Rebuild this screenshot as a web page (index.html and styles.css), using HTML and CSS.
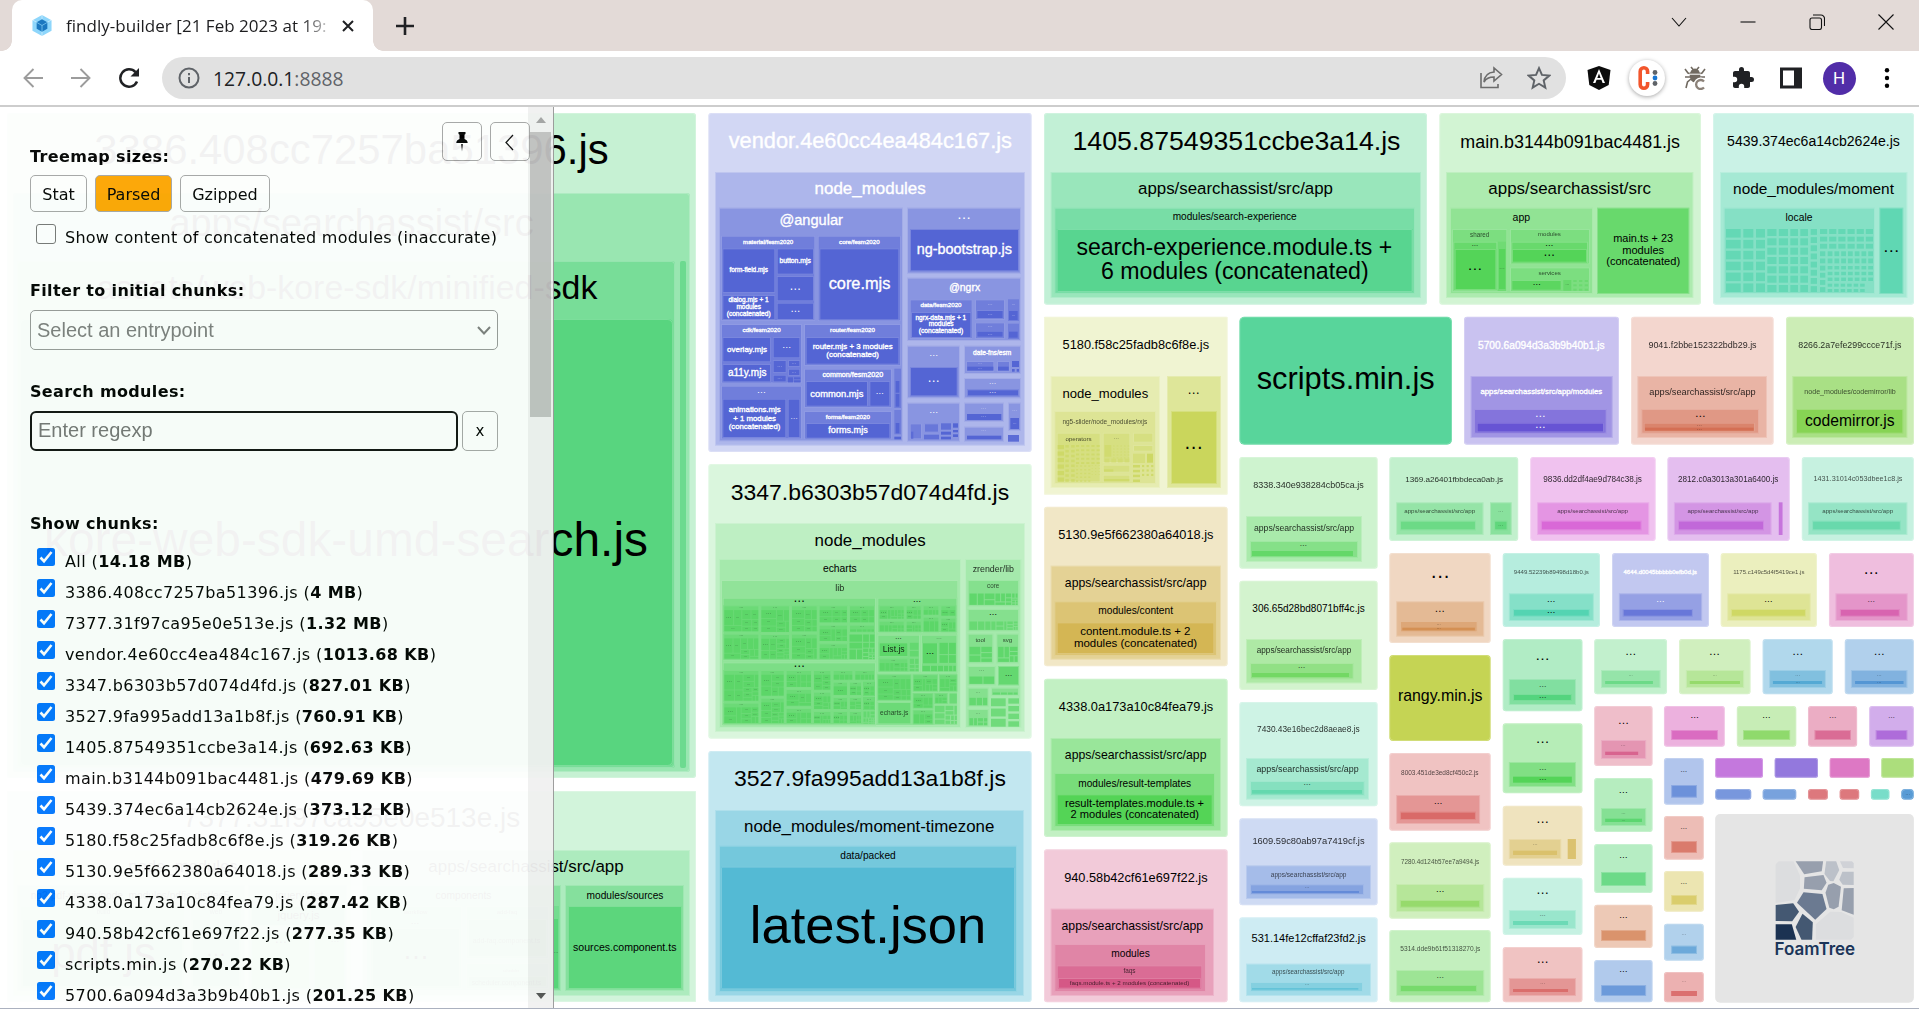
FILE: index.html
```html
<!DOCTYPE html>
<html lang="en">
<head>
<meta charset="utf-8">
<title>findly-builder [21 Feb 2023 at 19:</title>
<link rel="stylesheet" href="styles.css">
</head>
<body>
<header class="tabstrip">
  <div class="tab">
    <svg class="favicon" viewBox="0 0 20 22"><path fill="#8ed6fb" d="M10 0l10 5.5v11L10 22 0 16.500v-11z"/><path fill="#fff" opacity=".6" d="M9.600 0h.8v5h-.8zM0 5.600l.5-.7 4.500 2.600-.5.700zM20 5.600l-.5-.7L15 7.500l.5.700zM9.600 17h.8v5h-.8z"/><path fill="#1c78c0" d="M10 4.500l5.600 3.200v6.600L10 17.500l-5.600-3.200V7.700z"/><path fill="none" stroke="#8ed6fb" stroke-width=".7" d="M4.400 7.700L10 11l5.600-3.300M10 11v6.500"/></svg>
    <span class="tab-title">findly-builder [21 Feb 2023 at 19:</span>
    <svg class="tab-close" viewBox="0 0 12 12"><path d="M1 1l10 10M11 1L1 11"/></svg>
  </div>
  <svg class="new-tab" viewBox="0 0 18 18"><path d="M9 0v18M0 9h18"/></svg>
  <div class="window-buttons">
    <svg viewBox="0 0 16 16"><path d="M1 4l7 8 7-8"/></svg>
    <svg viewBox="0 0 16 16"><path d="M.5 8h15"/></svg>
    <svg viewBox="0 0 16 16"><rect x="1" y="4" width="11.500" height="11.500" rx="2"/><path d="M4 1h8a3.500 3.500 0 013.500 3.500V12"/></svg>
    <svg viewBox="0 0 16 16"><path d="M.5.500l15 15M15.500.500l-15 15"/></svg>
  </div>
</header>
<nav class="toolbar">
  <svg class="nav-icon dim" viewBox="0 0 20 20"><path d="M20 10H1.500M10.500 1L1.500 10l9 9"/></svg>
  <svg class="nav-icon dim" viewBox="0 0 20 20"><path d="M0 10h18.500M9.500 1l9 9-9 9"/></svg>
  <svg class="nav-icon reload" viewBox="0 0 20 20"><path d="M18 13.500A8.700 8.700 0 1 1 16.500 4.200"/><path class="solid" d="M20 0v8.500h-8.500z"/></svg>
  <div class="omnibox">
    <svg class="info" viewBox="0 0 22 22"><circle cx="11" cy="11" r="9.500"/><path d="M11 10v6M11 6v2.200"/></svg>
    <span class="url">127.0.0.1<span>:8888</span></span>
    <svg class="share" viewBox="0 0 24 24"><path d="M2 7v14.500h17V18M15 6V2l7.500 6.500L15 15v-4c-5 0-8 1.500-10 5 .5-6 4-9.500 10-10z"/></svg>
    <svg class="star" viewBox="0 0 22 22"><path d="M11 2l2.700 6.200 6.700.6-5.100 4.400 1.500 6.600L11 16.300l-5.800 3.500 1.500-6.600L1.600 8.800l6.700-.6z"/></svg>
  </div>
  <div class="extensions">
    <svg viewBox="0 0 24 24"><path fill="#0b0b0b" d="M12 0l11.500 4-1.800 15L12 24 2.300 19 .5 4z"/><path fill="#fff" d="M12 3l6 14h-2.400l-1.200-3.200H9.600L8.400 17H6zM12 7.600l-1.700 4.300h3.400z"/></svg>
    <div class="c-badge"><svg viewBox="0 0 24 24"><path fill="none" stroke="#f2552c" stroke-width="3.600" d="M12.600 8V5.500a3.700 3.700 0 00-7.400 0v13a3.700 3.700 0 007.400 0V16"/><circle cx="20" cy="6.500" r="2.400" fill="#5f6368"/><circle cx="20" cy="12" r="2.400" fill="#1976d2"/><circle cx="20" cy="17.500" r="2.400" fill="#5f6368"/></svg></div>
    <svg viewBox="0 0 24 24"><ellipse cx="12" cy="9.500" rx="5.300" ry="7" fill="#716a61"/><path fill="none" stroke="#716a61" stroke-width="1.600" d="M8 1l2.500 3M16 1l-2.500 3M2 3l3 4 3 1M22 3l-3 4-3 1M2 11h20M3 22l1.500-6L8 13"/><path stroke="#fff" d="M6 8.200h12"/><path fill="none" stroke="#fff" stroke-width="5" d="M21 15.500a4.500 4.500 0 100 6"/><path fill="none" stroke="#8b8178" stroke-width="2.300" d="M21 15.500a4.500 4.500 0 100 6"/></svg>
    <svg viewBox="0 0 24 24"><path fill="#202124" d="M20.500 11H19V7c0-1.100-.9-2-2-2h-4V3.500a2.500 2.500 0 00-5 0V5H4c-1.100 0-2 .9-2 2v3.800h1.500a2.700 2.700 0 010 5.400H2V20c0 1.100.9 2 2 2h3.800v-1.500a2.700 2.700 0 015.400 0V22H17c1.100 0 2-.9 2-2v-4h1.500a2.500 2.500 0 000-5z"/></svg>
    <svg viewBox="0 0 24 24"><path fill="#202124" d="M1 1.500h22v21H1z"/><path fill="#fff" d="M4 4.500h11v15H4z"/></svg>
    <div class="avatar">H</div>
    <svg viewBox="0 0 24 24"><circle cx="12" cy="4.200" r="2.200"/><circle cx="12" cy="12" r="2.200"/><circle cx="12" cy="19.800" r="2.200"/></svg>
  </div>
</nav>
<main class="viewport">
  <svg class="treemap" id="treemap" viewBox="0 107 1919 901"></svg>
  <aside class="sidebar">
    <div class="panel">
      <h2>Treemap sizes:</h2>
      <div class="sizes"><button>Stat</button><button class="active">Parsed</button><button>Gzipped</button></div>
      <label class="concat"><i class="box"></i>Show content of concatenated modules (inaccurate)</label>
      <h2 class="filter">Filter to initial chunks:</h2>
      <div class="select">Select an entrypoint<svg viewBox="0 0 14 9"><path d="M1 1l6 6.500L13 1"/></svg></div>
      <h2 class="search">Search modules:</h2>
      <div class="search-row"><div class="field">Enter regexp</div><button>x</button></div>
      <h2 class="chunks-title">Show chunks:</h2>
      <ul class="chunks" id="chunks"></ul>
    </div>
    <div class="scrollbar"><i class="up"></i><i class="thumb"></i><i class="down"></i></div>
    <div class="panel-actions">
      <button><svg viewBox="0 0 12 20"><path d="M2.500 0h7v2l-1 .8V7c2 .8 3.200 2 3.200 4H.3c0-2 1.200-3.200 3.200-4V2.800L2.500 2zM5.200 12h1.600L6 19.500z"/></svg></button>
      <button><svg viewBox="0 0 12 20"><path class="line" d="M9 3L2 10.500 9 18"/></svg></button>
    </div>
  </aside>
</main>
<script src="treemap.js"></script>
</body>
</html>
```
FILE: styles.css
```css
* { box-sizing: border-box; }
body { margin: 0; width: 1919px; height: 1009px; overflow: hidden; background: #fff; font-family: "DejaVu Sans", sans-serif; display: flex; flex-direction: column; }
svg { display: block; flex: none; }
.tabstrip { height: 51px; background: #e3dad7; display: flex; align-items: center; padding-left: 12px; flex: none; }
.tab { position: relative; width: 361px; height: 51px; background: #fff; border-radius: 10px 10px 0 0; display: flex; align-items: center; padding-left: 20px; }
.tab::before, .tab::after { content: ""; position: absolute; bottom: 0; width: 10px; height: 10px; }
.tab::before { left: -10px; background: radial-gradient(circle at 0 0, transparent 9.500px, #fff 10px); }
.tab::after { right: -10px; background: radial-gradient(circle at 100% 0, transparent 9.500px, #fff 10px); }
.favicon { width: 20px; height: 21px; }
.tab-title { margin-left: 14px; width: 262px; font: 17px "Open Sans", sans-serif; letter-spacing: .03px; color: #1d1d1f; white-space: nowrap; overflow: hidden; -webkit-mask-image: linear-gradient(90deg, #000 235px, transparent 270px); mask-image: linear-gradient(90deg, #000 235px, transparent 270px); }
.tab-close { width: 12px; height: 12px; margin-left: 14px; fill: none; stroke: #202124; stroke-width: 2; }
.new-tab { width: 18px; height: 18px; margin-left: 23px; stroke: #202124; stroke-width: 2.600; }
.window-buttons { margin-left: auto; display: flex; gap: 53px; padding-right: 25px; margin-top: -8px; }
.window-buttons svg { width: 16px; height: 16px; fill: none; stroke: #111; stroke-width: 1.100; }
.toolbar { height: 56px; border-bottom: 2px solid #cdcdcd; display: flex; align-items: center; padding-left: 23px; flex: none; }
.nav-icon { width: 20px; height: 20px; margin-right: 28px; fill: none; stroke: #202124; stroke-width: 2.500; }
.nav-icon.dim { stroke: #9c9c9c; stroke-width: 1.900; }
.nav-icon.reload { margin-right: 23px; }
.nav-icon .solid { fill: #202124; stroke: none; }
.omnibox { width: 1404px; height: 42px; border-radius: 21px; background: #e1e1e1; display: flex; align-items: center; padding: 0 15px 0 16px; }
.info { width: 22px; height: 22px; fill: none; stroke: #5f6368; stroke-width: 2; }
.url { margin-left: 13px; font: 19.300px "Open Sans", sans-serif; color: #202124; }
.url span { color: #5f6368; }
.share { width: 24px; height: 24px; margin-left: auto; fill: none; stroke: #6c6c6c; stroke-width: 1.600; }
.star { width: 24px; height: 24px; margin-left: 24px; fill: none; stroke: #5f6368; stroke-width: 1.800; }
.extensions { display: flex; align-items: center; gap: 24px; margin-left: 21px; }
.extensions > svg { width: 24px; height: 24px; }
.c-badge { width: 36px; height: 36px; margin: 0 -6px; border-radius: 50%; background: #fff; box-shadow: 0 1px 4px rgba(0,0,0,.35); display: grid; place-items: center; }
.c-badge svg { width: 24px; height: 24px; }
.avatar { width: 33px; height: 33px; margin: 0 -4.500px; border-radius: 50%; background: #512da8; color: #fff; font: 17px/33px Roboto, sans-serif; text-align: center; }
.viewport { position: relative; height: 902px; border-bottom: 1px solid #abb1bf; overflow: hidden; flex: none; }
.treemap { width: 1919px; height: 901px; }
.treemap text { font-family: "Liberation Sans", Arial, sans-serif; text-anchor: middle; }
.treemap .brand { font-family: Inter, sans-serif; font-weight: 600; fill: #1b3559; }
.sidebar { position: absolute; left: 0; top: 0; width: 554px; height: 901px; background: #fff; opacity: .95; border-right: 1px solid #999; display: flex; font-size: 16px; line-height: 20px; color: #000; }
.panel { width: 528px; height: 901px; padding: 40px 30px 0; overflow: hidden; }
h2 { margin: 0; font-size: 16px; line-height: 20px; font-weight: bold; letter-spacing: .35px; }
button { font: 16px/20px "DejaVu Sans", sans-serif; color: #000; background: #fff; border: 1px solid #a6a6a6; border-radius: 5px; padding: 0; }
.sizes { display: flex; gap: 8px; margin-top: 8px; }
.sizes button { height: 37px; width: 57px; padding-top: 3px; }
.sizes .active { background: #ffa500; width: 77px; }
.sizes button:last-child { width: 90px; }
.concat { display: flex; height: 20px; margin: 16px 0 0 6px; white-space: nowrap; letter-spacing: .24px; }
.box { width: 20px; height: 20px; flex: none; margin: -4px 9px 0 0; border: 1.500px solid #767676; border-radius: 3px; }
.filter { margin-top: 33px; }
.select { width: 468px; height: 40px; margin-top: 9px; border: 1px solid #999; border-radius: 5px; display: flex; align-items: center; justify-content: space-between; padding: 0 6px; font-family: "Liberation Sans", Arial, sans-serif; font-size: 20px; color: #7d7d7d; }
.select svg { width: 14px; height: 9px; fill: none; stroke: #7d7d7d; stroke-width: 2; }
.search { margin-top: 32px; }
.search-row { display: flex; gap: 4px; margin-top: 9px; }
.field { width: 428px; height: 40px; border: 2.500px solid #101010; border-radius: 6px; padding: 6px 6px; font: 20px/23px "Liberation Sans", Arial, sans-serif; color: #757575; }
.search-row button { width: 36px; height: 40px; font-size: 15px; }
.chunks-title { margin-top: 63px; }
.chunks { list-style: none; margin: 12px 0 0 6px; padding: 0; letter-spacing: .4px; }
.chunks li { display: flex; height: 31px; white-space: nowrap; padding-top: 6px; }
.chunks svg { width: 18px; height: 18px; margin: -4px 10px 0 1px; }
.scrollbar { width: 25px; background: #f1f1f1; display: flex; flex-direction: column; align-items: center; }
.up, .down { border: 5.500px solid transparent; }
.up { border-bottom: 6px solid #a3a3a3; border-top: 0; margin-top: 10px; }
.thumb { width: 21px; height: 285px; background: #c1c1c1; margin-top: 9px; }
.down { border-top: 6px solid #505050; border-bottom: 0; margin-top: auto; margin-bottom: 9px; }
.panel-actions { position: absolute; left: 442px; top: 15px; display: flex; gap: 8px; }
.panel-actions button { width: 40px; height: 39px; display: grid; place-items: center; background: none; }
.panel-actions svg { width: 12px; height: 20px; }
.panel-actions .line { fill: none; stroke: #111; stroke-width: 1.300; }
```
FILE: treemap.js
```js
const SVG = 'http://www.w3.org/2000/svg';
const root = document.getElementById('treemap');

// Commands, one per line, in the units of the section they belong to:
//   h hue                     current hue
//   r x1 y1 x2 y2 light [rad] group rectangle
//   t x1 x2 baseline label    dark label fitted between x1 and x2
//   w x1 x2 baseline label    white label
//   d cx cy width [w]         collapsed label
//   g x1 y1 x2 y2 cols rows light
//   m x1 y1 x2 y2 count light squarified leaves
//   s x1 y1 x2 y2 count       small group with header and leaves
const sections = [
[0, 0, 1, 1, `
h 139
r 7 113 696 778 86 3
t 96 607 164 3386.408cc7257ba51396.js
r 13 193 690 772 75 3
t 171 532 236 apps/searchassist/src
r 17 261 675 768 67 3
r 680 261 686 768 64 2
t 98 596 299 assets/web-kore-sdk/minified-sdk
r 20 319 673 766 59 5
t 46 646 556 kore-web-sdk-umd-search.js
h 136
r 7 791 696 1002 89 1
t 184 519 827 7377.31f97ca95e0e513e.js
r 13 850 351 996 81
t 129 237 872 node_modules
r 362 850 690 996 80
t 429 623 872 apps/searchassist/src/app
r 17 885 245 991 73
t 31 229 899 ng2-pdf-viewer/node_modules/pdfjs-dist/es5
r 20 906 185 989 67
t 97 110 914 build
r 22 919 183 987 59
t 53 154 968 pdf.js
r 190 906 242 989 67
t 210 222 914 web
r 192 919 240 987 59
d 216 955 16
r 248 885 347 991 73
t 276 323 899 jquery/dist
r 251 906 345 926 59
t 278 319 919 jquery.js
r 251 931 310 989 62
d 281 942 10
r 314 931 345 989 62
d 335 942 7
r 366 885 561 991 70
t 436 491 899 components
r 370 906 462 989 66
t 404 427 914 workflow
d 415 924 7
r 372 928 460 987 59
d 416 958 21
r 466 906 549 959 66
t 497 517 914 add-faq
r 468 919 547 957 59
t 473 540 943 add-faq.component.ts
r 466 963 549 989 66
t 503 519 972 scheduler
r 468 976 547 987 59
t 472 541 985 scheduler.component.ts
r 552 906 559 989 66
r 554 919 558 988 59
d 556 953 4
r 565 885 684 991 70
t 587 663 899 modules/sources
r 568 906 682 989 60
t 573.500 676 951 sources.component.ts
`],
[540, 100, 3, 3, `
h 232
r 505 39 1475 1056 89 3
w 569 1413 145 vendor.4e60cc4ea484c167.js
r 525 216 1455 1037 80
w 826 1155 283 node_modules
r 537 323 1089 1024 71
w 720 907 375 @angular
r 543 407 826 663 65
w 610 759 431 material/fesm2020
r 547 445 706 579 58
w 569 683 516 form-field.mjs
r 547 585 706 660 58
w 566 685 606 dialog.mjs + 1
w 590 662 627 modules
w 561 691 648 (concatenated)
r 710 445 822 524 58
w 719 812 489 button.mjs
r 710 528 822 604 58
d 766 567 28 w
r 710 608 822 660 58
d 766 635 24 w
r 833 407 1083 663 65
w 898 1018 431 core/fesm2020
r 838 445 1078 661 58
w 868 1049 567 core.mjs
r 543 672 786 850 65
w 608 721 696 cdk/fesm2020
r 547 711 693 787 58
w 562 680 756 overlay.mjs
r 547 792 693 847 58
w 565 678 827 a11y.mjs
r 698 711 781 775 58
d 740 743 22 w
r 698 780 740 819 58
d 719 800 13 w
r 744 780 781 801 58
d 762 792 10 w
r 744 806 781 828 58
d 762 818 10 w
r 698 824 740 847 58
d 719 836 11 w
r 744 832 759 847 58
r 762 832 781 838 58
r 762 841 781 847 58
r 792 672 1083 798 65
w 871 1004 696 router/fesm2020
r 797 711 1078 794 58
w 819 1057 747 router.mjs + 3 modules
w 860 1016 771 (concatenated)
r 792 806 1056 924 65
w 848 1029 831 common/fesm2020
r 797 843 984 920 58
w 812 969 890 common.mjs
r 988 843 1051 920 58
d 1019 882 20 w
r 1063 806 1083 924 65
r 1067 843 1078 878 58
r 1067 882 1078 920 58
r 543 857 786 1018 65
d 664 878 22 w
r 547 896 739 1014 58
w 567 721 935 animations.mjs
w 581 707 962 + 1 modules
w 567 720 986 (concatenated)
r 743 896 781 1014 58
d 762 956 18 w
r 792 933 1056 1018 65
w 858 989 957 forms/fesm2020
r 797 969 1051 1016 58
w 866 982 998 forms.mjs
r 1063 930 1083 1003 65
r 1067 969 1078 1000 58
r 1063 1010 1083 1018 58
r 1101 323 1443 521 71
d 1272 354 34 w
r 1110 387 1437 514 58
w 1132 1414 461 ng-bootstrap.js
r 1101 533 1443 723 71
w 1229 1319 573 @ngrx
r 1109 598 1298 717 65
w 1142 1264 621 data/fesm2020
r 1113 636 1294 714 58
w 1127 1278 661 ngrx-data.mjs + 1
w 1167 1240 679 modules
w 1137 1269 699 (concatenated)
r 1305 598 1395 660 65
d 1350 613 13 w
r 1309 630 1391 657 58
d 1350 644 13 w
r 1305 667 1395 717 65
d 1350 680 13 w
r 1309 692 1391 713 58
d 1350 703 13 w
r 1404 598 1437 663 65
d 1420 615 9 w
r 1407 633 1433 660 58
d 1420 647 9 w
r 1404 671 1437 717 65
r 1407 695 1433 713 58
r 1101 737 1260 895 71
d 1181 768 22 w
r 1110 801 1253 889 58
d 1181 844 30 w
r 1272 737 1443 822 71
w 1300 1413 765 date-fns/esm
r 1278 783 1363 816 65
d 1320 792 9 w
r 1282 800 1360 811 58
d 1320 806 9 w
r 1371 783 1410 816 65
r 1374 800 1406 811 58
r 1416 783 1437 801 58
r 1416 807 1424 815 58
r 1430 807 1437 815 58
r 1272 834 1443 895 71
d 1358 851 18 w
r 1281 868 1437 889 58
d 1358 878 18 w
r 1101 908 1260 1025 71
d 1181 939 22 w
r 1109 970 1146 1018 65
r 1113 995 1120 1016 60
r 1152 970 1197 998 63
r 1152 1004 1197 1018 61
r 1203 970 1233 989 61
r 1203 995 1233 1004 58
r 1203 1010 1233 1018 58
r 1239 970 1254 983 58
r 1239 990 1254 997 58
r 1239 1003 1254 1011 58
r 1272 908 1392 966 71
d 1331 925 14 w
r 1281 942 1384 960 58
d 1331 951 14 w
r 1272 980 1392 1025 71
d 1331 993 12 w
r 1281 1007 1384 1018 58
r 1404 908 1443 993 71
d 1424 931 12 w
r 1411 954 1437 987 58
d 1424 970 9 w
r 1404 1005 1437 1025 60
`],
[540, 450, 3, 3, `
h 126
r 505 42 1475 866 91 3
t 575 1405 149 3347.b6303b57d074d4fd.js
r 525 219 1455 846 84
t 826 1155 288 node_modules
r 537 327 1263 834 78
t 850 949 366 echarts
r 543 390 1255 828 73
t 887 912 422 lib
r 548 443 1008 632 68
d 778 454 28
s 550 466 658 547 9
s 661 466 750 549 8
s 753 466 833 547 9
s 836 466 924 520 6
s 927 466 1005 520 6
s 550 551 658 629 11
s 661 552 750 629 14
s 753 551 833 629 8
s 836 524 924 576 7
s 836 580 924 629 10
s 927 524 1005 548 5
m 927 552 1005 629 18 60
r 548 637 1008 826 68
d 778 648 28
s 550 660 658 755 14
s 661 660 734 740 6
s 737 660 816 714 7
s 819 660 874 722 5
s 878 660 940 692 4
s 943 660 1005 692 5
s 550 758 658 822 10
s 661 743 734 822 13
s 737 717 816 770 5
s 737 774 816 822 7
s 819 725 874 780 8
s 819 783 874 822 8
s 878 695 924 738 1
s 927 695 966 738 4
s 969 695 1005 738 4
s 878 741 924 780 5
s 927 741 966 780 5
s 969 741 1005 780 4
s 878 783 924 822 6
s 927 783 966 822 7
m 969 783 1005 822 16 62
r 1012 443 1252 549 68
d 1131 454 20
s 1016 466 1094 509 12
s 1097 466 1145 509 6
s 1148 466 1198 497 4
s 1201 466 1249 500 2
s 1016 512 1094 547 9
s 1097 512 1145 547 7
s 1148 500 1198 547 3
s 1201 503 1249 547 5
r 1012 554 1140 668 68
d 1075 566 16
r 1016 577 1105 621 60
t 1029 1093 606 List.js
m 1108 577 1137 621 2 62
s 1016 625 1105 665 9
m 1108 625 1137 665 6 62
r 1143 554 1252 668 68
d 1197 566 14
r 1146 577 1194 643 60
d 1170 610 20
m 1197 577 1249 640 4 60
m 1146 646 1249 665 6 60
s 1012 673 1114 752 12
r 1012 756 1114 823 64
t 1021 1104 795 echarts.js
s 1118 673 1194 725 9
s 1197 673 1252 725 7
s 1118 729 1180 776 5
s 1118 779 1180 823 4
s 1183 729 1223 762 4
m 1227 729 1252 762 1 64
m 1183 766 1252 823 12 64
r 1275 327 1444 834 78
t 1299 1421 365 zrender/lib
r 1283 390 1437 469 70
t 1342 1377 413 core
m 1287 429 1434 466 17 61
r 1283 477 1437 544 70
d 1359 494 20
m 1287 513 1434 541 14 63
r 1283 551 1360 640 70
t 1307 1335 575 tool
m 1287 589 1357 637 5 61
r 1369 551 1437 640 70
t 1389 1416 575 svg
m 1373 589 1434 637 7 61
r 1283 648 1367 706 70
d 1325 663 14
m 1287 678 1364 703 2 61
r 1374 648 1437 706 62
d 1406 677 18
r 1283 713 1346 770 70
d 1314 728 10
m 1287 742 1343 767 3 62
r 1283 777 1346 830 70
d 1314 791 10
m 1287 803 1343 827 6 62
r 1353 713 1437 738 70
m 1357 726 1434 735 4 62
g 1353 745 1397 830 1 3 65
g 1405 745 1437 830 1 4 65
`],
[540, 740, 3, 3, `
h 192
r 505 33 1475 786 85 3
t 585 1395 137 3527.9fa995add13a1b8f.js
r 525 210 1452 768 75
t 614 1361 276 node_modules/moment-timezone
r 537 317 1431 756 66
t 902 1066 356 data/packed
r 543 380 1425 748 58 1
t 636 1332 608 latest.json
`],
[1030, 100, 3, 3, `
h 147
r 42 39 1191 614 85 3
t 131 1108 150 1405.87549351ccbe3a14.js
r 62 216 1173 594 75
t 326 907 282 apps/searchassist/src/app
r 73 323 1155 582 67
t 429 799 361 modules/search-experience
r 80 387 1148 576 59 1
t 142 1084 464 search-experience.module.ts +
t 216 1013 537 6 modules (concatenated)
h 66
r 42 650 593 1184 89 1
t 99 536 748 5180.f58c25fadb8c6f8e.js
r 62 828 390 1164 81
t 99 353 893 node_modules
r 73 933 378 1152 74
t 98 351 971 ng5-slider/node_modules/rxjs
r 80 998 212 1147 69
t 107 184 1022 operators
g 83 1035 102 1145 1 6 63
g 106 1035 134 1145 2 8 64
g 138 1035 209 1092 5 5 64
g 138 1096 181 1145 4 5 65
g 185 1096 209 1125 3 4 65
r 218 998 301 1089 69
d 259 1017 14
r 224 1035 244 1070 65
g 249 1037 298 1075 5 5 64
g 224 1076 298 1087 4 1 66
r 218 1094 301 1118 69
r 222 1108 250 1115 64
r 218 1124 301 1147 69
r 222 1137 298 1144 64
r 309 998 370 1028 69
r 309 1035 370 1055 69
r 309 1061 345 1089 68
r 351 1061 369 1088 62
g 309 1095 330 1146 1 4 63
g 336 1095 370 1128 3 3 64
r 411 828 573 1164 75
d 491 880 30
r 423 933 561 1152 60
d 491 1043 46
h 152
r 628 650 1266 1034 59 5
t 684 1210 867 scripts.min.js
`],
[1470, 100, 3, 3, `
h 122
r -92 39 693 614 89 3
t -27 628 143 main.b3144b091bac4481.js
r -72 216 670 594 80
t 57 541 283 apps/searchassist/src
r -60 323 369 582 73
t 129 179 362 app
r -54 387 112 576 68
t 1 57 410 shared
r -50 425 82 573 63
d 15 436 16
r -46 447 79 570 58
d 15 508 36
r 84 425 108 573 65
r 87 447 106 567 59
d 96 505 14
r 120 387 360 493 68
t 205 272 409 modules
r 124 425 354 491 63
d 238 436 20
r 126 447 351 488 58
d 238 467 28
r 120 502 360 576 68
t 206 272 524 services
r 124 540 275 572 60
d 200 555 20
r 280 540 304 572 63
d 292 555 10
g 310 540 354 572 3 3 64
r 381 323 658 582 63
t 431 608 426 main.ts + 23
t 458 581 461 modules
t 410 629 495 (concatenated)
h 162
r 729 39 1332 614 87 3
t 773 1288 138 5439.374ec6a14cb2624e.js
r 750 216 1312 594 78
t 791 1270 283 node_modules/moment
r 761 323 1215 582 70
t 948 1026 362 locale
g 768 387 812 576 1 6 62
g 820 387 850 576 1 6 62
g 858 387 885 576 1 6 62
g 892 387 954 576 2 7 62
g 961 387 984 576 1 7 62
g 991 387 1014 576 1 7 62
g 1022 387 1041 576 1 8 62
g 1050 387 1209 402 6 1 62
g 1050 410 1209 446 6 2 62
g 1050 454 1066 576 1 6 62
g 1073 454 1209 490 7 2 62
g 1073 498 1209 543 7 3 62
g 1073 551 1184 576 6 2 62
r 1228 323 1300 582 61
d 1264 452 40
h 249
r -18 650 447 1034 85 3
w 25 403 746 5700.6a094d3a3b9b40b1.js
r 2 828 428 1014 74
w 32 396 881 apps/searchassist/src/app/modules
r 12 927 410 1001 66
d 211 948 26 w
r 20 968 402 997 58
d 211 982 26 w
h 13
r 483 650 911 1034 88 3
t 536 859 743 9041.f2bbe152322bdb29.js
r 502 828 891 1014 78
t 539 856 884 apps/searchassist/src/app
r 514 927 867 1001 70
d 691 948 26
r 521 968 855 995 64
r 525 983 851 992 58
d 688 976 14
d 688 988 14
h 96
r 948 650 1332 1034 82 3
t 986 1293 743 8266.2a7efe299ccce71f.js
r 967 828 1312 1014 70
t 1004 1276 881 node_modules/codemirror/lib
r 978 927 1300 1001 58
t 1007 1272 977 codemirror.js
`],
[1030, 440, 3, 3, `
h 46
r 42 200 593 679 86 3
t 86 549 298 5130.9e5f662380a64018.js
r 62 377 573 659 74
t 106 528 441 apps/searchassist/src/app
r 73 484 561 648 66
t 206 428 521 modules/content
r 80 547 553 642 58
t 152 480 584 content.module.ts + 2
t 133 500 620 modules (concatenated)
h 121
r 42 716 593 1191 85 3
t 88 548 813 4338.0a173a10c84fea79.js
h 122
r 628 51 1043 386 88 3
t 671 1000 143 8338.340e938284cb05ca.js
r 648 228 996 366 79
t 673 971 272 apps/searchassist/src/app
r 660 303 984 354 70
d 820 317 18
r 666 333 969 348 62
h 112
r 628 422 1043 750 88 3
t 668 1003 515 306.65d28bd8071bff4c.js
r 648 597 996 730 78
t 681 963 638 apps/searchassist/src/app
r 660 669 971 718 70
d 815 684 18
r 666 699 957 711 62
h 158
r 628 786 1043 1099 88 3
t 682 988 875 7430.43e16bec2d8aeae8.js
`],
[1030, 730, 3, 3, `
h 121
r 62 24 573 303 75
t 106 528 87 apps/searchassist/src/app
r 73 129 555 291 67
t 146 482 170 modules/result-templates
r 80 193 548 285 58
t 106 521 230 result-templates.module.ts +
t 123 506 264 2 modules (concatenated)
h 338
r 42 358 593 817 87 3
t 104 531 457 940.58b42cf61e697f22.js
r 62 536 552 798 77
t 96 518 600 apps/searchassist/src/app
r 73 642 528 786 70
t 245 358 681 modules
r 80 706 517 779 64
t 281 316 728 faqs
r 84 744 513 776 59
t 120 477 764 faqs.module.ts + 2 modules (concatenated)
h 158
r 648 84 1017 209 78
t 680 985 126 apps/searchassist/src/app
r 660 153 1004 198 70
d 831 165 18
r 666 180 996 191 62
h 220
r 628 265 1043 526 88 3
t 668 1003 341 1609.59c80ab97a7419cf.js
r 648 406 1023 507 78
t 723 949 440 apps/searchassist/src/app
r 660 463 1002 495 70
d 831 472 12
r 666 483 987 489 62
h 191
r 628 562 1043 817 88 3
t 666 1006 637 531.14fe12cffaf23fd2.js
r 648 701 1023 798 77
t 727 943 731 apps/searchassist/src/app
r 660 756 999 786 70
d 831 765 12
r 666 774 985 779 62
`],
[1380, 440, 2.909, 3, `
h 134
r 27 51 402 303 85 3
t 74 357 126 1369.a26401fbbdeca0ab.js
r 47 187 301 285 74
t 71 276 218 apps/searchassist/src/app
r 58 242 279 271 64
r 320 187 383 285 71
d 351 214 12
r 332 242 371 271 61
d 351 257 12
h 301
r 437 51 802 303 85 3
t 476 761 126 9836.dd2df4ae9d784c38.js
r 457 187 783 285 74
t 516 721 218 apps/searchassist/src/app
r 468 242 761 271 63
h 287
r 836 51 1192 303 84 3
t 868 1158 126 2812.c0a3013a301a6400.js
r 855 187 1139 285 74
t 895 1100 218 apps/searchassist/src/app
r 867 242 1117 271 63
r 1160 187 1171 285 66
h 156
r 1227 51 1553 303 86 3
t 1262 1519 123 1431.31014c053dbee1c8.js
r 1245 187 1534 285 74
t 1287 1492 218 apps/searchassist/src/app
r 1257 242 1515 271 63
h 28
r 27 339 322 609 85 3
d 175 412 46
r 47 484 303 590 74
d 174 514 24
r 58 543 284 577 67
d 171 554 10
r 65 563 276 571 58
d 171 567 10
h 67
r 27 645 322 903 58 4
t 54 296 784 rangy.min.js
h 164
r 357 339 640 561 82 3
t 390 607 403 9449.52239b89498d18b0.js
r 375 460 622 543 70
d 498 484 20
r 387 507 610 530 58
d 498 519 20
h 232
r 675 339 957 561 85 3
w 709 921 403 4644.d0045bbbbb0efb0d.js
r 695 460 937 543 74
d 816 484 20 w
r 706 507 910 530 63
h 65
r 991 339 1271 561 84 3
t 1028 1234 403 1175.c149c5d4f5419ce1.js
r 1010 460 1253 543 74
d 1130 484 20
r 1021 507 1239 530 62
h 321
r 1306 339 1553 561 84 3
d 1429 400 36
r 1325 460 1535 543 74
d 1429 484 18
r 1338 507 1512 530 62
h 140
r 357 597 589 814 81 3
d 473 657 34
r 375 717 570 795 69
d 473 740 18
r 387 762 558 783 58
d 473 772 18
h 135
r 623 597 835 763 85 3
d 729 643 26
r 643 690 816 744 74
d 729 706 10
r 655 723 794 732 64
h 97
r 870 597 1078 763 84 3
d 973 643 26
r 890 690 1059 744 75
d 974 706 10
r 901 723 1047 732 64
h 200
r 1113 597 1317 763 81 3
d 1215 643 26
r 1132 690 1297 744 69
d 1215 706 12
r 1143 723 1286 732 58
d 1215 728 10
h 209
r 1352 597 1553 763 81 3
d 1452 643 26
r 1370 690 1534 744 69
d 1452 706 12
r 1382 723 1523 732 58
d 1452 728 10
h 345
r 623 798 793 978 84 3
d 708 849 26
h 314
r 826 798 1003 920 81 3
d 915 834 20
r 847 870 983 900 64
h 101
r 1038 798 1211 920 82 3
d 1124 834 20
r 1056 870 1193 900 64
h 338
r 1245 798 1388 920 80 3
d 1317 834 18
r 1264 870 1370 900 64
h 276
r 1423 798 1553 920 80 3
d 1488 834 16
r 1442 870 1534 900 64
h 122
r 357 850 589 1060 82 3
`],
[1380, 730, 2.909, 3, `
h 338
r 643 30 774 87 74
d 707 47 12
r 655 65 751 75 62
h 1
r 27 69 322 302 85 3
t 62 286 136 8003.451de3ed8cf450c2.js
r 47 195 291 282 74
d 169 220 20
r 58 245 279 270 63
h 97
r 27 337 322 566 84 3
t 62 288 403 7280.4d124b57ee7a9494.js
r 47 462 303 546 75
d 175 486 20
r 58 510 291 533 64
h 114
r 27 600 322 817 84 3
t 60 291 663 5314.dde9b61f51318270.js
r 47 720 303 798 74
d 175 742 18
r 58 765 282 786 64
h 122
d 473 38 32
r 375 96 570 171 69
d 473 118 18
r 387 140 558 158 58
d 473 150 18
h 46
r 357 227 589 407 84 3
d 473 276 30
r 375 327 527 387 73
d 451 345 12
r 387 362 515 375 64
r 546 327 570 387 65
h 160
r 357 443 589 615 86 3
d 473 491 30
r 375 540 570 597 75
d 473 556 14
r 387 573 547 585 64
h 1
r 357 651 589 817 85 3
d 473 698 28
r 375 744 570 798 74
d 473 761 12
r 387 777 547 786 64
h 130
r 623 144 793 306 82 3
d 708 189 22
r 643 234 774 288 70
d 708 251 10
r 655 266 762 276 60
d 708 271 8
h 135
r 623 342 793 489 82 3
d 708 384 20
r 643 426 774 468 64
h 21
r 623 524 793 654 82 3
d 708 562 20
r 643 600 774 633 64
h 215
r 623 690 793 817 81 3
d 708 726 20
r 643 765 774 798 64
h 220
r 826 84 942 224 81 3
d 884 125 16
r 847 165 922 203 64
h 8
r 826 258 942 389 82 3
d 884 296 16
r 847 333 922 369 64
h 53
r 826 423 942 545 81 3
d 884 460 16
r 847 495 922 525 64
h 207
r 826 581 942 692 81 3
d 884 613 12
r 847 647 922 672 64
h 0
r 826 726 942 817 81 3
d 884 755 10
r 847 783 922 798 65
h 285
r 975 84 1114 143 67 2
h 256
r 1148 84 1274 143 67 2
h 315
r 1308 84 1425 143 67 2
h 91
r 1458 84 1553 143 68 2
h 222
r 975 177 1080 209 67 3
h 215
r 1113 177 1211 209 67 3
h 357
r 1245 177 1303 209 67 3
r 1337 177 1394 209 67 3
h 168
r 1428 177 1482 209 67 3
h 208
r 1516 177 1553 209 59 4
d 1535 194 11
`],
];

const add = (tag, attrs, text) => {
  const el = document.createElementNS(SVG, tag);
  for (const k in attrs) el.setAttribute(k, attrs[k]);
  if (text) el.textContent = text;
  root.appendChild(el);
  return el;
};

function fitted(x1, x2, y, text, attrs) {
  const el = add('text', { x: (x1 + x2) / 2, y, 'font-size': 100, ...attrs }, text);
  const size = (x2 - x1) / (el.getComputedTextLength() / 100 - 0.085);
  el.setAttribute('font-size', size.toFixed(2));
  if (attrs.fill === '#000' && size < 9.5) el.setAttribute('opacity', size < 7.5 ? 0.68 : 0.82);
}

function leaves(x1, y1, x2, y2, n, gap, draw) {
  const items = Array.from({ length: n }, (_, i) => Math.pow(0.84, i));
  const split = (list, a, b, c, d) => {
    if (list.length === 1) return draw(a + gap / 2, b + gap / 2, c - gap / 2, d - gap / 2);
    const total = list.reduce((s, v) => s + v, 0);
    let k = 0, sum = 0;
    do { sum += list[k++]; } while (k < list.length - 1 && sum < total * 0.45);
    const f = sum / total;
    if (c - a > d - b) {
      split(list.slice(0, k), a, b, a + (c - a) * f, d);
      split(list.slice(k), a + (c - a) * f, b, c, d);
    } else {
      split(list.slice(0, k), a, b, c, b + (d - b) * f);
      split(list.slice(k), a, b + (d - b) * f, c, d);
    }
  };
  split(items, x1, y1, x2, y2);
}

for (const [ox, oy, kx, ky, body] of sections) {
  let hue = 0;
  const X = v => ox + v / kx, Y = v => oy + v / ky;
  const rect = (a, b, c, d, light, rad = 0, edge = .22) => {
    const w = X(c) - X(a), h = Y(d) - Y(b);
    if (w <= 0 || h <= 0) return;
    const fill = `hsl(${hue} 60% ${light}%)`;
    add('rect', { x: X(a).toFixed(2), y: Y(b).toFixed(2), width: w.toFixed(2), height: h.toFixed(2), rx: rad, fill });
    if (edge && w > 12 && h > 6) add('rect', { x: (X(a) + .5).toFixed(2), y: (Y(b) + .5).toFixed(2), width: (w - 1).toFixed(2), height: (h - 1).toFixed(2), rx: rad, fill: 'none', stroke: '#fff', 'stroke-opacity': edge });
  };
  const dots = (cx, cy, w, white) => {
    const size = w / kx / 0.78;
    add('text', { x: X(cx), y: Y(cy) + size * 0.05, 'font-size': size.toFixed(2), fill: white ? '#fff' : '#000', opacity: size < 6 ? .6 : 1 }, '…');
  };
  for (const line of body.trim().split('\n')) {
    const p = line.split(' '), n = p.slice(1).map(Number);
    switch (p[0]) {
      case 'h': hue = n[0]; break;
      case 'r': rect(...n); break;
      case 't':
        fitted(X(n[0]), X(n[1]), Y(n[2]), p.slice(4).join(' '), { fill: '#000' });
        break;
      case 'w':
        fitted(X(n[0]), X(n[1]), Y(n[2]), p.slice(4).join(' '), { fill: '#fff', stroke: '#fff', 'stroke-width': .35 });
        break;
      case 'd': dots(n[0], n[1], n[2], p[4] === 'w'); break;
      case 'g': {
        const [a, b, c, d, cols, rows, light] = n;
        const gx = cols > 3 ? 6 : 7, gy = 7;
        const w = (c - a + gx) / cols, h = (d - b + gy) / rows;
        for (let i = 0; i < cols; i++) for (let j = 0; j < rows; j++)
          rect(a + i * w, b + j * h, a + (i + 1) * w - gx, b + (j + 1) * h - gy, light, 0, 0);
        break;
      }
      case 'm':
        leaves(n[0], n[1], n[2], n[3], n[4], 3, (a, b, c, d) => rect(a, b, c, d, n[5], 0, 0));
        break;
      case 's': {
        const [a, b, c, d, count] = n;
        rect(a, b, c, d, 64, 0, .1);
        dots((a + c) / 2, b + 7, 10);
        let first = true;
        leaves(a + 2, b + 13, c - 2, d - 2, count, 2.5, (e, f, g, h) => {
          rect(e, f, g, h, 60, 0, 0);
          if (g - e > 16 && h - f > 9) dots((e + g) / 2, (f + h) / 2, first ? 14 : 8);
          first = false;
        });
        break;
      }
    }
  }
}

// Attribution tile
const L = v => 1380 + v / 2.909, M = v => 730 + v / 3;
add('rect', { x: L(975), y: M(252), width: L(1553) - L(975), height: M(818) - M(252), rx: 5, fill: '#e5e5e5' });
[
  ['#dcdddf', '1151 403 1160 394 1203 394 1222 437 1222 475 1206 510 1151 519'],
  ['#979fad', '1209 394 1289 394 1285 424 1234 433'],
  ['#bcc1c9', '1298 394 1327 394 1336 420 1319 454 1309 453 1293 432'],
  ['#d0d2d7', '1338 394 1373 394 1378 400 1378 415 1347 414'],
  ['#bcc1c9', '1345 425 1378 425 1378 465 1346 464 1336 449'],
  ['#979fad', '1235 442 1290 435 1299 458 1285 481 1233 476'],
  ['#979fad', '1304 464 1320 459 1341 470 1334 530 1320 538 1307 533 1296 488'],
  ['#979fad', '1349 475 1378 474 1378 554 1343 541'],
  ['#6b7a91', '1232 487 1287 492 1299 537 1266 569 1213 518'],
  ['#445872', '1151 525 1202 520 1219 545 1199 574 1151 573'],
  ['#445872', '1229 551 1259 577 1257 629 1226 629 1209 591'],
  ['#1b3252', '1151 583 1198 583 1211 629 1151 629'],
  ['#dcdddf', '1268 583 1310 545 1342 546 1378 563 1378 620 1370 629 1268 629'],
].forEach(([fill, pts]) => {
  const v = pts.split(' ').map(Number);
  add('polygon', { fill, points: v.map((n, i) => (i % 2 ? M(n) : L(n)).toFixed(2)).join(' ') });
});
fitted(L(1150), L(1380), M(675), 'FoamTree', { class: 'brand' });

const chunks = [
  ['All', '14.18 MB'], ['3386.408cc7257ba51396.js', '4 MB'], ['7377.31f97ca95e0e513e.js', '1.32 MB'],
  ['vendor.4e60cc4ea484c167.js', '1013.68 KB'], ['3347.b6303b57d074d4fd.js', '827.01 KB'],
  ['3527.9fa995add13a1b8f.js', '760.91 KB'], ['1405.87549351ccbe3a14.js', '692.63 KB'],
  ['main.b3144b091bac4481.js', '479.69 KB'], ['5439.374ec6a14cb2624e.js', '373.12 KB'],
  ['5180.f58c25fadb8c6f8e.js', '319.26 KB'], ['5130.9e5f662380a64018.js', '289.33 KB'],
  ['4338.0a173a10c84fea79.js', '287.42 KB'], ['940.58b42cf61e697f22.js', '277.35 KB'],
  ['scripts.min.js', '270.22 KB'], ['5700.6a094d3a3b9b40b1.js', '201.25 KB'],
];
document.getElementById('chunks').innerHTML = chunks.map(([name, size]) =>
  `<li><svg viewBox="0 0 18 18"><rect width="18" height="18" rx="2.500" fill="#0075ff"/><path d="M3.500 9.500l3.500 3.700L14.500 4" fill="none" stroke="#fff" stroke-width="2.600"/></svg><span>${name} (<b>${size}</b>)</span></li>`).join('');
```
